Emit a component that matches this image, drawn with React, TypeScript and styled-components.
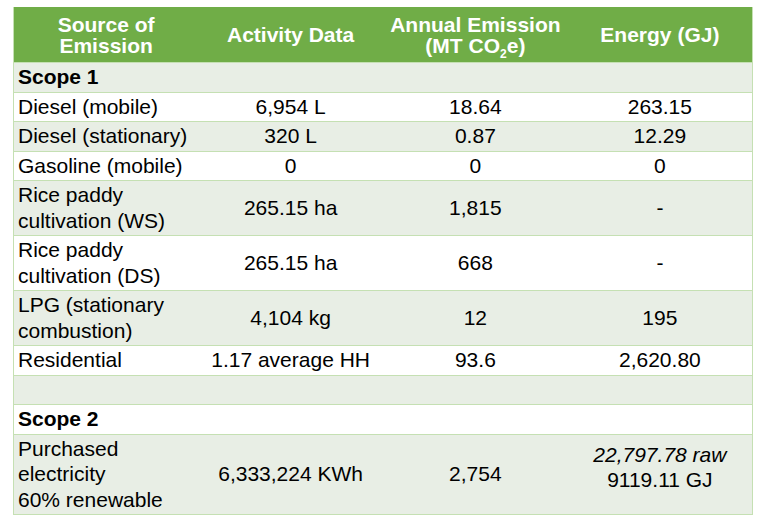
import React from 'react';
import styled, { createGlobalStyle } from 'styled-components';

const GlobalStyle = createGlobalStyle`
  body {
    margin: 0;
    background: #ffffff;
    font-family: "Liberation Sans", Arial, sans-serif;
    color: #000000;
  }
`;

const Page = styled.div`
  padding: 7px 0 0 13px;
`;

const Table = styled.table`
  width: 740px;
  border-collapse: collapse;
  table-layout: fixed;
  border-left: 1px solid #c5e0b3;
  border-right: 1px solid #c5e0b3;
`;

const HeadCell = styled.th`
  background: #70ad47;
  color: #ffffff;
  font-size: 21px;
  font-weight: bold;
  line-height: 21px;
  height: 55px;
  padding: 0 4px;
  text-align: center;
  vertical-align: middle;
  border-bottom: 1px solid #c5e0b3;
`;

const Sub = styled.sub`
  font-size: 12px;
  line-height: 0;
`;

const Row = styled.tr<{ $band: boolean }>`
  background: ${({ $band }) => ($band ? '#e8eee5' : '#ffffff')};
  border-bottom: 1px solid #c5e0b3;
`;

const Cell = styled.td<{ $align?: 'left' | 'center'; $raise?: boolean }>`
  font-size: 21px;
  line-height: 25.5px;
  padding: ${({ $raise }) => ($raise ? '0 4px 14px' : '1px 4px 2px')};
  text-align: ${({ $align }) => $align || 'center'};
  vertical-align: middle;
  white-space: nowrap;
`;

const ScopeCell = styled(Cell)`
  font-weight: bold;
`;

const Italic = styled.span`
  font-style: italic;
`;

type DataRow =
  | { kind: 'scope'; label: string }
  | { kind: 'empty' }
  | { kind: 'data'; source: React.ReactNode; activity: string; emission: string; energy: React.ReactNode; raise?: boolean };

const rows: DataRow[] = [
  { kind: 'scope', label: 'Scope 1' },
  { kind: 'data', source: 'Diesel (mobile)', activity: '6,954 L', emission: '18.64', energy: '263.15' },
  { kind: 'data', source: 'Diesel (stationary)', activity: '320 L', emission: '0.87', energy: '12.29' },
  { kind: 'data', source: 'Gasoline (mobile)', activity: '0', emission: '0', energy: '0' },
  {
    kind: 'data',
    source: (<>Rice paddy<br />cultivation (WS)</>),
    activity: '265.15 ha',
    emission: '1,815',
    energy: '-',
  },
  {
    kind: 'data',
    source: (<>Rice paddy<br />cultivation (DS)</>),
    activity: '265.15 ha',
    emission: '668',
    energy: '-',
  },
  {
    kind: 'data',
    source: (<>LPG (stationary<br />combustion)</>),
    activity: '4,104 kg',
    emission: '12',
    energy: '195',
  },
  { kind: 'data', source: 'Residential', activity: '1.17 average HH', emission: '93.6', energy: '2,620.80' },
  { kind: 'empty' },
  { kind: 'scope', label: 'Scope 2' },
  {
    kind: 'data',
    source: (<>Purchased<br />electricity<br />60% renewable</>),
    activity: '6,333,224 KWh',
    emission: '2,754',
    energy: (<><Italic>22,797.78 raw</Italic><br />9119.11 GJ</>),
    raise: true,
  },
];

export default function App() {
  return (
    <>
      <GlobalStyle />
      <Page>
        <Table>
          <thead>
            <tr>
              <HeadCell>Source of<br />Emission</HeadCell>
              <HeadCell>Activity Data</HeadCell>
              <HeadCell>Annual Emission<br />(MT CO<Sub>2</Sub>e)</HeadCell>
              <HeadCell>Energy (GJ)</HeadCell>
            </tr>
          </thead>
          <tbody>
            {rows.map((row, i) => {
              const band = i % 2 === 0;
              if (row.kind === 'scope') {
                return (
                  <Row key={i} $band={band}>
                    <ScopeCell $align="left" colSpan={4}>{row.label}</ScopeCell>
                  </Row>
                );
              }
              if (row.kind === 'empty') {
                return (
                  <Row key={i} $band={band}>
                    <Cell colSpan={4}>&nbsp;</Cell>
                  </Row>
                );
              }
              return (
                <Row key={i} $band={band}>
                  <Cell $align="left">{row.source}</Cell>
                  <Cell>{row.activity}</Cell>
                  <Cell>{row.emission}</Cell>
                  <Cell $raise={row.raise}>{row.energy}</Cell>
                </Row>
              );
            })}
          </tbody>
        </Table>
      </Page>
    </>
  );
}
